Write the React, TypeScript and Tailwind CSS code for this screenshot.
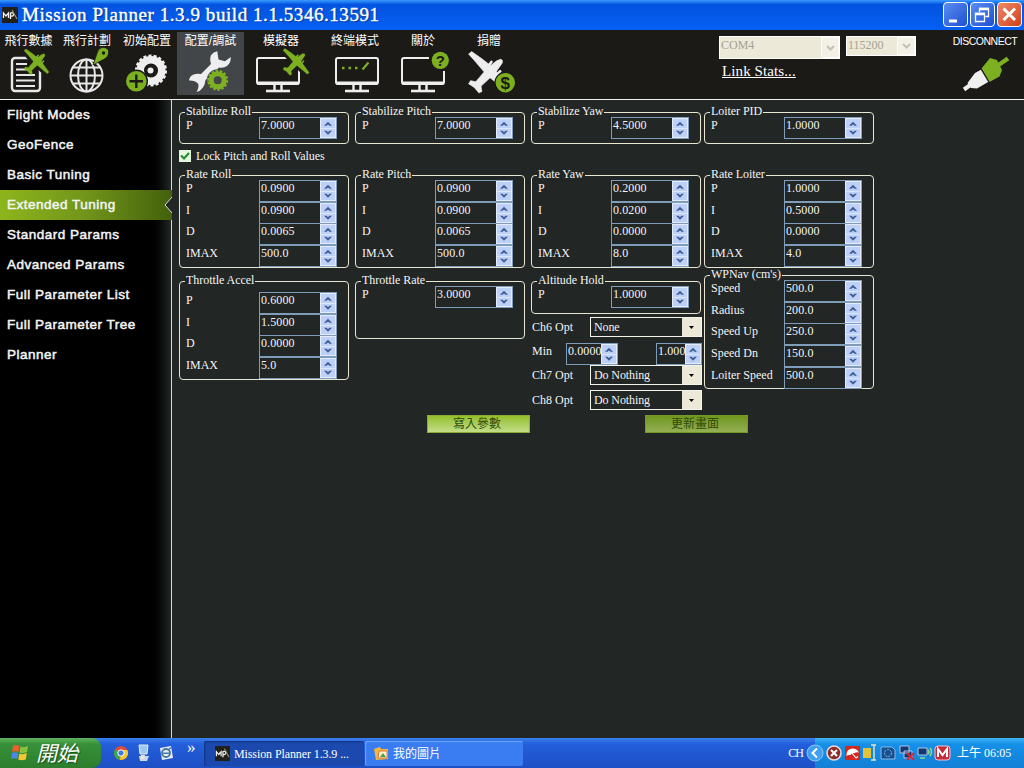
// src/App.tsx
import React from 'react';

type Field = { label: string; value: string };

const Plane: React.FC<{ x: number; y: number; scale: number; color: string }> = ({ x, y, scale, color }) => (
  <g transform={`translate(${x} ${y}) scale(${scale})`} fill={color} stroke={color} strokeLinejoin="round">
    <path d="M0 5L6 0L26 14L49 32L78 72L73 77L35 45L10 16Z" strokeWidth="1" />
    <path d="M61 15Q67 15 65 22L52 41L24 67L14 58L36 32L54 18Z" strokeWidth="1" />
    <path d="M0 62L4 56L18 59L24 66L26 77L20 80L11 69Z" strokeWidth="1" />
    <path d="M39 27L44 20M55 44L61 38" strokeWidth="5" strokeLinecap="round" />
  </g>
);

const Gear: React.FC<{ cx: number; cy: number; r: number; width: number; teeth: number; color: string }> = ({
  cx,
  cy,
  r,
  width,
  teeth,
  color,
}) => (
  <g fill="none" stroke={color}>
    <circle cx={cx} cy={cy} r={r} strokeWidth={width} />
    <circle cx={cx} cy={cy} r={r + width / 2} strokeWidth="3" pathLength={teeth * 2} strokeDasharray="1.2 0.8" />
  </g>
);

const Monitor: React.FC<{ x: number; gap?: boolean }> = ({ x, gap }) => (
  <g fill="none" stroke="#eee" strokeWidth="2">
    <path
      d={
        gap
          ? `M${x + 28} 58H${x + 3}Q${x + 1} 58 ${x + 1} 60V82Q${x + 1} 84 ${x + 3} 84H${x + 41}Q${x + 43} 84 ${x + 43} 82V71`
          : `M${x + 3} 58H${x + 41}Q${x + 43} 58 ${x + 43} 60V82Q${x + 43} 84 ${x + 41} 84H${x + 3}Q${x + 1} 84 ${x + 1} 82V60Q${x + 1} 58 ${x + 3} 58Z`
      }
    />
    <path d={`M${x + 1} 83H${x + 43}`} strokeWidth="3" />
    <path d={`M${x + 18.5} 84V91M${x + 25.5} 84V91`} strokeWidth="2.4" />
    <path d={`M${x + 10} 91H${x + 34}`} strokeWidth="2.6" />
  </g>
);

const menu = [
  {
    label: '飛行數據',
    cell: 'w-[57px]',
    box: '0 46 57 49',
    width: 57,
    icon: (
      <>
        <rect x="12" y="58" width="28" height="33" rx="3" fill="none" stroke="#e8e8e8" strokeWidth="2.4" />
        <path d="M16 64H27M16 69.5H28M16 75H35M16 80.5H35M16 86H35" stroke="#e8e8e8" strokeWidth="2" />
        <path d="M27 55L43 71" stroke="#1b1a17" strokeWidth="5" />
        <Plane x={24} y={49} scale={0.32} color="#7cb021" />
      </>
    ),
  },
  {
    label: '飛行計劃',
    cell: 'w-[60px]',
    box: '57 46 60 49',
    width: 60,
    icon: (
      <>
        <g fill="none" stroke="#e8e8e8" strokeWidth="2">
          <circle cx="86.5" cy="75.5" r="16" />
          <ellipse cx="86.5" cy="75.5" rx="8.5" ry="16" />
          <path d="M86.5 59.5V91.5M70.5 75.5H102.5M73 67.5H100M73 83.5H100" />
        </g>
        <path
          d="M93 65L97.5 52A6 5.500 0 0 1 108.500 50Q109.500 57 103.500 59.500Z"
          fill="#7cb021"
          stroke="#1b1a17"
          strokeWidth="0.8"
        />
        <circle cx="103.5" cy="53" r="1.7" fill="#1b1a17" />
      </>
    ),
  },
  {
    label: '初始配置',
    cell: 'w-[60px]',
    box: '117 46 60 49',
    width: 60,
    icon: (
      <>
        <Gear cx={151} cy={70.5} r={10.8} width={7.5} teeth={18} color="#eee" />
        <circle cx="150.5" cy="70.5" r="3" fill="#eee" />
        <circle cx="136.3" cy="81.3" r="11" fill="#7cb021" stroke="#1b1a17" strokeWidth="1.4" />
        <path d="M129.5 81.3H143M136.3 74.5V88" stroke="#1b1a17" strokeWidth="2.4" />
      </>
    ),
  },
  {
    label: '配置/調試',
    cell: 'w-[67px] bg-[#434648]',
    box: '177 46 67 49',
    width: 67,
    icon: (
      <>
        <path
          d="M217.3 51.3L218.5 59.500L225 61.2L230.8 57Q231 63 227 66Q223.500 68.500 219 67.500L205.500 80Q205 85 202.500 88Q200 91.500 196.500 92Q199.500 87 198 83.500Q194.500 80 189 80.500Q189.500 76.500 193 74.800Q196.500 73 201 74L211 64Q209 57 212 54Q214 52 217.300 51.300Z"
          fill="#eee"
        />
        <circle cx="217.7" cy="80.3" r="11" fill="#434648" />
        <Gear cx={217.7} cy={80.3} r={6.5} width={5} teeth={14} color="#7cb021" />
      </>
    ),
  },
  {
    label: '模擬器',
    cell: 'w-[74px]',
    box: '244 46 74 49',
    width: 74,
    icon: (
      <>
        <Monitor x={256} />
        <path d="M287 55L304 72" stroke="#1b1a17" strokeWidth="6" />
        <Plane x={283} y={48.5} scale={0.335} color="#7cb021" />
      </>
    ),
  },
  {
    label: '終端模式',
    cell: 'w-[74px]',
    box: '318 46 74 49',
    width: 74,
    icon: (
      <>
        <Monitor x={335} />
        <path d="M342 68H344.500M348.500 68H351M355 68H357.500" stroke="#7cb021" strokeWidth="2.400" />
        <path d="M362.500 69.500L368.500 62.500" stroke="#7cb021" strokeWidth="2.200" />
      </>
    ),
  },
  {
    label: '關於',
    cell: 'w-[62px]',
    box: '392 46 62 49',
    width: 62,
    icon: (
      <>
        <Monitor x={401} gap />
        <circle cx="440.3" cy="60.3" r="8.6" fill="#7cb021" />
        <text x="440.3" y="65.6" textAnchor="middle" fontSize="15" fontWeight="bold" fill="#1b1a17">
          ?
        </text>
      </>
    ),
  },
  {
    label: '捐贈',
    cell: 'w-[70px]',
    box: '454 46 70 49',
    width: 70,
    icon: (
      <>
        <Plane x={468.5} y={51.5} scale={0.52} color="#eee" />
        <circle cx="505.3" cy="82.7" r="10.3" fill="#7cb021" stroke="#1b1a17" strokeWidth="1.2" />
        <text x="505.3" y="88.6" textAnchor="middle" fontSize="17" fontWeight="bold" fill="#1b1a17">
          $
        </text>
      </>
    ),
  },
];

const pages = [
  'Flight Modes',
  'GeoFence',
  'Basic Tuning',
  'Extended Tuning',
  'Standard Params',
  'Advanced Params',
  'Full Parameter List',
  'Full Parameter Tree',
  'Planner',
];

const pid = (p: string, i: string, d: string, imax: string): Field[] => [
  { label: 'P', value: p },
  { label: 'I', value: i },
  { label: 'D', value: d },
  { label: 'IMAX', value: imax },
];

const Spinner: React.FC<{ value: string; width?: string }> = ({ value, width = 'w-[78px]' }) => (
  <div className={`flex h-[22px] shrink-0 border border-[#7f9db9] ${width}`}>
    <span className="min-w-0 flex-1 pl-px leading-[15px] tracking-[0.1px] whitespace-nowrap">{value}</span>
    <span className="relative flex w-4 shrink-0 items-center justify-center border border-[#e4ecfb] bg-[#bdd0f8]">
      <svg width="14" height="18" viewBox="0 0 14 18" fill="#3f5c96">
        <path d="M3 6.800L7 2.800L11 6.800H8.500L7 5.600L5.500 6.800ZM3 11.800L7 15.800L11 11.800H8.500L7 13L5.500 11.800Z" />
        <path d="M0 9H14V10H0Z" fill="#dbe5fb" />
      </svg>
    </span>
  </div>
);

const Group: React.FC<{ title: string; fields: Field[]; className: string }> = ({ title, fields, className }) => (
  <div className={`relative rounded-[4px] border border-[#e6e6d2] pl-[6px] ${className}`}>
    <span className="absolute -top-[8px] left-[5px] bg-[#222625] px-px leading-[13px] tracking-[-0.05px] whitespace-nowrap">
      {title}
    </span>
    {fields.map((f) => (
      <div key={f.label} className="flex h-[21.7px] items-start">
        <span className="w-[73px] shrink-0 leading-[17px] whitespace-nowrap">{f.label}</span>
        <Spinner value={f.value} />
      </div>
    ))}
  </div>
);

const Select: React.FC<{ label: string; value: string }> = ({ label, value }) => (
  <div className="flex h-5 items-center pl-px">
    <span className="w-[58px] shrink-0">{label}</span>
    <div className="flex h-5 w-28 shrink-0 border border-[#f4f4ea]">
      <span className="flex-1 pl-[3px] leading-[18px] tracking-[-0.1px]">{value}</span>
      <span className="flex w-[19px] items-center justify-center bg-[#ece9d8]">
        <svg width="5" height="3" viewBox="0 0 5 3">
          <path d="M0 0H5L2.500 3Z" fill="#000" />
        </svg>
      </span>
    </div>
  </div>
);

const DisabledCombo: React.FC<{ value: string; className: string }> = ({ value, className }) => (
  <div className={`flex border border-white bg-[#ece9d8] text-[#a5a293] ${className}`}>
    <span className="flex-1 pl-px leading-[17px]">{value}</span>
    <span className="flex w-[18px] items-center justify-center border border-[#fbfaf5] bg-[#f3f1e7]">
      <svg width="9" height="6" viewBox="0 0 9 6" fill="none" stroke="#c4c1b0" strokeWidth="2">
        <path d="M1 1L4.500 4.500L8 1" />
      </svg>
    </span>
  </div>
);

const AppLogo: React.FC<{ className: string }> = ({ className }) => (
  <svg viewBox="0 0 16 16" className={className}>
    <rect width="16" height="16" fill="#22201a" />
    <path d="M1.500 11V6L4 9L6.500 6V11M8.500 12V6Q12 5 11.500 8Q11 9.500 8.500 9" fill="none" stroke="#f2f2f2" strokeWidth="1.300" />
    <path d="M10 3L15 12" stroke="#8a9a72" strokeWidth="1.200" />
  </svg>
);

const TitleBar: React.FC = () => (
  <header className="flex h-[30px] shrink-0 items-center bg-linear-to-b from-[#3b9bff] via-[#0453e0] via-15% to-[#0560f2] pr-[2px] pl-[2px]">
    <AppLogo className="h-4 w-4" />
    <h1 className="ml-1 flex-1 text-[19px] leading-[30px] font-normal tracking-[0.56px] whitespace-nowrap text-white [-webkit-text-stroke:0.4px_white] [text-shadow:1px_1px_1px_#0a2f8a]">
      Mission Planner 1.3.9 build 1.1.5346.13591
    </h1>
    <div className="flex gap-[2px] pb-px">
      <span className="h-[25px] w-[25px] rounded-[4px] border border-white bg-linear-to-br from-[#5b8df0] to-[#1d4fd0]">
        <svg viewBox="0 0 23 23">
          <path d="M5 18H13" stroke="#fff" strokeWidth="3" />
        </svg>
      </span>
      <span className="h-[25px] w-[25px] rounded-[4px] border border-white bg-linear-to-br from-[#5b8df0] to-[#1d4fd0]">
        <svg viewBox="0 0 23 23" fill="none" stroke="#fff">
          <path d="M8.500 9V5.500H17.500V13.500H14.500M4.500 10.500H13.500V18.500H4.500Z" strokeWidth="1.300" />
          <path d="M8 6H18M4 11H14" strokeWidth="2.400" />
        </svg>
      </span>
      <span className="h-[25px] w-[25px] rounded-[4px] border border-white bg-linear-to-br from-[#ee8a68] to-[#cf3d12]">
        <svg viewBox="0 0 23 23">
          <path d="M5.500 5.500L17 17M17 5.500L5.500 17" stroke="#fff" strokeWidth="3" />
        </svg>
      </span>
    </div>
  </header>
);

const Toolbar: React.FC = () => (
  <div className="flex h-[70px] shrink-0 border-b border-[#f0f0f0] bg-[#1b1a17] pt-[2px] text-white">
    {menu.map((m) => (
      <div key={m.label} className={`flex h-[63px] shrink-0 flex-col items-center ${m.cell}`}>
        <span className="h-[14px] font-['Liberation_Sans','Noto_Sans_CJK_TC',sans-serif] text-[12px] leading-[18px] whitespace-nowrap">
          {m.label}
        </span>
        <svg width={m.width} height="49" viewBox={m.box} fontFamily="Liberation Sans, sans-serif">
          {m.icon}
        </svg>
      </div>
    ))}
    <div className="ml-auto w-[225px] pt-1">
      <div className="flex items-start gap-[6px]">
        <DisabledCombo value="COM4" className="h-[23px] w-[121px]" />
        <DisabledCombo value="115200" className="h-5 w-[70px]" />
      </div>
      <a href="#" className="ml-[3px] block text-[15px] leading-[24px] tracking-[0.1px] underline">
        Link Stats...
      </a>
    </div>
    <div className="flex w-20 flex-col items-center font-['Liberation_Sans',sans-serif] text-[10.500px]">
      <span className="ml-[2px] h-[18px] leading-[19px] tracking-[-0.5px]">DISCONNECT</span>
      <svg width="80" height="44" viewBox="944 50 80 44">
        <path d="M964 89.500L971 84.500" stroke="#f0f0f0" strokeWidth="4" />
        <path d="M967.500 83L975 73L981.500 69.500L989 81.500L977 88.500L971 88Z" fill="#f0f0f0" />
        <path d="M981.500 68.500L990 58L997 60L1002 70L999.500 76.500L989.500 82Z" fill="#7cb021" />
        <path d="M980.500 68L989.500 83" stroke="#1b1a17" strokeWidth="1.300" />
        <path d="M997 66L1008 58.500" stroke="#7cb021" strokeWidth="4.500" />
      </svg>
    </div>
  </div>
);

const Sidebar: React.FC = () => (
  <nav className="w-[172px] shrink-0 border-r border-[#d8d8d8] bg-linear-to-r from-black from-86% to-[#222625] font-['Liberation_Sans',sans-serif] text-[13.500px] tracking-[0.500px] text-[#f4f4f4] [-webkit-text-stroke:0.500px_#f4f4f4]">
    {pages.map((p) =>
      p === 'Extended Tuning' ? (
        <div
          key={p}
          className="-mr-px flex h-[30px] items-center justify-between bg-linear-to-r from-[#8db51b] via-[#71951a] via-50% to-[#43610c] pl-[7px]"
        >
          <span>{p}</span>
          <svg width="8" height="18" viewBox="0 0 8 18">
            <path d="M8 1L1 9L8 17" fill="#222625" stroke="#d8d8d8" />
          </svg>
        </div>
      ) : (
        <div key={p} className="flex h-[30px] items-center pl-[7px]">
          {p}
        </div>
      ),
    )}
  </nav>
);

const Tuning: React.FC = () => (
  <main className="min-w-0 flex-1 bg-[#222625] pt-3 pl-[7px] text-[#f4f4f4]">
    <div className="flex h-[303px] items-start">
      <div className="mr-[6px] w-[170px] shrink-0">
        <Group title="Stabilize Roll" fields={[{ label: 'P', value: '7.0000' }]} className="h-8 pt-1" />
        <label className="flex h-[31px] items-center pb-[7px] tracking-[-0.1px] whitespace-nowrap">
          <span className="mr-[5px] flex h-3 w-3 items-center justify-center bg-[#e2f6e0]">
            <svg width="10" height="10" viewBox="0 0 10 10" fill="none" stroke="#2a8a36" strokeWidth="2.200">
              <path d="M1 4.500L4 7.500L9 2" />
            </svg>
          </span>
          Lock Pitch and Roll Values
        </label>
        <Group title="Rate Roll" fields={pid('0.0900', '0.0900', '0.0065', '500.0')} className="h-[93px] pt-1" />
        <Group
          title="Throttle Accel"
          fields={pid('0.6000', '1.5000', '0.0000', '5.0')}
          className="mt-[13px] h-[99px] pt-[10px]"
        />
      </div>
      <div className="mr-[6px] w-[170px] shrink-0">
        <Group title="Stabilize Pitch" fields={[{ label: 'P', value: '7.0000' }]} className="h-8 pt-1" />
        <Group
          title="Rate Pitch"
          fields={pid('0.0900', '0.0900', '0.0065', '500.0')}
          className="mt-[31px] h-[93px] pt-1"
        />
        <Group title="Throttle Rate" fields={[{ label: 'P', value: '3.0000' }]} className="mt-[13px] h-[58px] pt-1" />
      </div>
      <div className="mr-[3px] w-[170px] shrink-0">
        <Group title="Stabilize Yaw" fields={[{ label: 'P', value: '4.5000' }]} className="h-8 pt-1" />
        <Group
          title="Rate Yaw"
          fields={pid('0.2000', '0.0200', '0.0000', '8.0')}
          className="mt-[31px] h-[93px] pt-1"
        />
        <Group title="Altitude Hold" fields={[{ label: 'P', value: '1.0000' }]} className="mt-[13px] h-[33px] pt-1" />
        <div className="pt-[3px]">
          <Select label="Ch6 Opt" value="None" />
          <div className="flex h-7 items-start pt-[6px] pl-px">
            <span className="w-[34px] shrink-0 leading-[16px]">Min</span>
            <Spinner value="0.0000" width="w-[52px]" />
            <span className="w-[38px] shrink-0" />
            <Spinner value="1.000" width="w-[46px]" />
          </div>
          <Select label="Ch7 Opt" value="Do Nothing" />
          <div className="h-[5px]" />
          <Select label="Ch8 Opt" value="Do Nothing" />
        </div>
      </div>
      <div className="w-[170px] shrink-0">
        <Group title="Loiter PID" fields={[{ label: 'P', value: '1.0000' }]} className="h-8 pt-1" />
        <Group
          title="Rate Loiter"
          fields={pid('1.0000', '0.5000', '0.0000', '4.0')}
          className="mt-[31px] h-[93px] pt-1"
        />
        <Group
          title="WPNav (cm's)"
          fields={[
            { label: 'Speed', value: '500.0' },
            { label: 'Radius', value: '200.0' },
            { label: 'Speed Up', value: '250.0' },
            { label: 'Speed Dn', value: '150.0' },
            { label: 'Loiter Speed', value: '500.0' },
          ]}
          className="mt-[7px] h-[114px] pt-1"
        />
      </div>
    </div>
    <div className="ml-[248px] flex gap-[115px] text-[#2f4a0c]">
      <button className="h-[18px] w-[103px] border border-[#8cab3a] bg-linear-to-b from-[#94bf26] to-[#c3dd85] pr-[3px] leading-[11px]">
        寫入參數
      </button>
      <button className="h-[18px] w-[103px] border border-[#76982a] bg-linear-to-b from-[#6f961b] to-[#94b052] pr-[3px] leading-[11px]">
        更新畫面
      </button>
    </div>
  </main>
);

const TaskBar: React.FC = () => (
  <footer className="flex h-[30px] shrink-0 items-stretch bg-linear-to-b from-[#3a80ee] from-0% via-[#245edb] via-20% to-[#1d4fc4] text-white">
    <div className="flex w-[101px] items-center rounded-r-[9px] bg-linear-to-b from-[#5fb45a] via-[#37913a] via-20% to-[#2d7d2c] pl-[10px]">
      <svg width="20" height="18" viewBox="0 0 20 18">
        <path d="M3 2Q6 0 9.500 2L8.500 8Q5 6.500 2 8Z" fill="#e8602c" />
        <path d="M10.500 2.500Q14 4 18 2L17 8Q13 10 9.500 8.500Z" fill="#86c440" />
        <path d="M2 9Q5 7.500 8.300 9L7.300 15Q4 13.500 1 15Z" fill="#4b86e8" />
        <path d="M9.300 9.500Q13 11 16.800 9L15.800 15.500Q12 17 8.300 15.500Z" fill="#f5c832" />
      </svg>
      <span className="ml-[6px] pb-[2px] font-['Noto_Sans_CJK_TC',sans-serif] text-[21px] leading-[28px] italic [text-shadow:1px_1px_1px_#1c4a1a]">
        開始
      </span>
    </div>
    <div className="flex w-[103px] items-center pl-3">
      <svg width="16" height="16" viewBox="0 0 16 16">
        <circle cx="8" cy="8" r="7" fill="#dd4b39" />
        <path d="M8 8L1.900 4.500A7 7 0 0 0 7 15Z" fill="#3aa757" />
        <path d="M8 8L7 15A7 7 0 0 0 14.300 5H8Z" fill="#f6c92c" />
        <circle cx="8" cy="8" r="3.200" fill="#3f7ee0" stroke="#fff" />
      </svg>
      <svg width="16" height="18" viewBox="0 0 16 18" className="ml-[7px]">
        <path d="M3 1H12L11 10H4Z" fill="#9cc8f0" stroke="#e3eefb" />
        <path d="M3 12H13L11 17H4Z" fill="#c9d8e8" />
        <path d="M5 11H9L8 15H4Z" fill="#e8e6d8" />
      </svg>
      <svg width="16" height="16" viewBox="0 0 16 16" className="ml-[6px]">
        <path d="M2 3L13 1L15 13L4 15Z" fill="#e9eef4" />
        <circle cx="8" cy="8" r="4" fill="none" stroke="#46799f" strokeWidth="1.800" />
        <path d="M4.500 8.300H11M10 5L13 2.500" stroke="#46799f" strokeWidth="1.500" />
      </svg>
      <span className="ml-[13px] pb-3 text-[17px] leading-none">»</span>
    </div>
    <div className="mt-[3px] mr-px flex h-[25px] w-[160px] items-center rounded-[2px] bg-[#1c49ae] pl-[11px] shadow-[inset_1px_1px_2px_#12347f]">
      <AppLogo className="mr-[4px] h-[15px] w-[15px]" />
      <span className="tracking-[-0.1px] whitespace-nowrap">Mission Planner 1.3.9 ...</span>
    </div>
    <div className="mt-[3px] flex h-[25px] w-[158px] items-center rounded-[2px] bg-[#3a7df2] pl-[9px] shadow-[inset_1px_1px_1px_#6ea4f8]">
      <svg width="15" height="15" viewBox="0 0 15 15">
        <path d="M0 3L6 1L7 3H14V13L2 14Z" fill="#f3b83b" />
        <path d="M5 5H13V12H4Z" fill="#fff5cf" stroke="#e1762f" />
        <path d="M6 11L9 7L12 11Z" fill="#4aa05a" />
      </svg>
      <span className="ml-1">我的圖片</span>
    </div>
    <span className="ml-auto self-center pr-[3px] tracking-[-1px]">CH</span>
    <div className="flex w-[218px] items-center">
      <svg width="18" height="18" viewBox="0 0 18 18" className="relative z-10 shrink-0">
        <circle cx="9" cy="9" r="8" fill="#3f9ff0" stroke="#8cc8f8" />
        <path d="M11 4.500L6.500 9L11 13.500" fill="none" stroke="#fff" strokeWidth="2" />
      </svg>
      <div className="-ml-[9px] flex h-[30px] flex-1 items-center bg-linear-to-b from-[#3fb4f4] via-[#1590e8] via-20% to-[#1280d6] pl-[11px]">
        <svg width="126" height="18" viewBox="0 0 126 18" className="shrink-0">
          <circle cx="8" cy="9" r="7" fill="#8e2c2a" stroke="#e6dcdc" strokeWidth="1.600" />
          <path d="M5 6L11 12M11 6L5 12" stroke="#fff" strokeWidth="2" />
          <rect x="19" y="2" width="15" height="14" fill="#d5281c" />
          <path d="M20.500 12Q20 5 26 4.500Q31 4.500 33 8.500Q30 8 28.500 9Q25.500 8.500 24.500 11Q22 10.500 20.500 12Z" fill="#fff" />
          <path d="M26 9L30 14L32 12.500" fill="none" stroke="#fff" strokeWidth="1.200" />
          <path d="M37 4H45V14H37Z" fill="#e4c338" />
          <path d="M45 1H50M48 1V16M45 16H50" stroke="#e9e3bd" strokeWidth="1.400" />
          <path d="M55 3H66L69 6V15H55Z" fill="#17508f" stroke="#88b7e5" />
          <circle cx="62" cy="9" r="3.500" fill="none" stroke="#7db5e8" strokeDasharray="2 1" />
          <path d="M74 2H83V9H74ZM78 7H86V14H78Z" fill="#17356f" stroke="#aac8e8" />
          <path d="M81 9L88 16M88 9L81 16" stroke="#db2734" strokeWidth="2" />
          <path d="M92 4H101V11H92Z" fill="#17356f" stroke="#aac8e8" />
          <path d="M94 14H99M102 6Q104 8 102 10M104 4Q107 8 104 12" fill="none" stroke="#8cdb88" strokeWidth="1.500" />
          <rect x="109" y="2" width="15" height="14" rx="3" fill="#c72b3b" stroke="#f1c4c8" />
          <path d="M112 13V5L116.500 11L121 5V13" fill="none" stroke="#fff" strokeWidth="2" />
        </svg>
        <span className="ml-[5px] whitespace-nowrap">上午 06:05</span>
      </div>
    </div>
  </footer>
);

const App: React.FC = () => {
  return (
    <div className="flex h-[768px] w-[1024px] flex-col overflow-hidden bg-[#222625] font-['Liberation_Serif','Noto_Sans_CJK_TC',serif] text-[12px]">
      <TitleBar />
      <Toolbar />
      <div className="flex min-h-0 flex-1">
        <Sidebar />
        <Tuning />
      </div>
      <TaskBar />
    </div>
  );
};

export default App;
